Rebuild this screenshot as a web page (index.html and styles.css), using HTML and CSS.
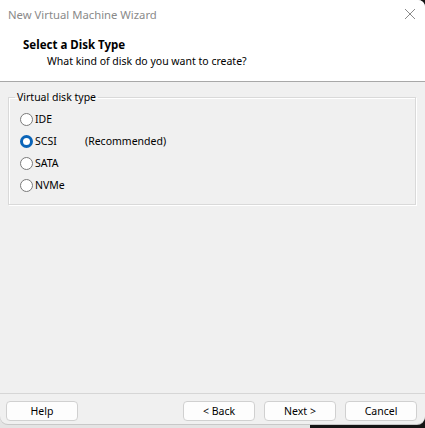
FILE: index.html
```html
<!DOCTYPE html>
<html>
<head>
<meta charset="utf-8">
<link rel="stylesheet" href="styles.css">
</head>
<body>
<div class="screen">
  <div class="window">
    <div class="header">
      <div class="titlebar">
        <span class="title">New Virtual Machine Wizard</span>
        <svg class="close" width="12" height="12" viewBox="0 0 12 12"><path d="M1 1L11 11M11 1L1 11" stroke="#8a8a8a" stroke-width="1" fill="none"/></svg>
      </div>
      <div class="heading">Select a Disk Type</div>
      <div class="sub">What kind of disk do you want to create?</div>
    </div>
    <div class="body">
      <fieldset class="group">
        <legend>Virtual disk type</legend>
        <div class="opt"><span class="radio"></span><span class="lbl">IDE</span></div>
        <div class="opt"><span class="radio on"></span><span class="lbl">SCSI</span><span class="rec">(Recommended)</span></div>
        <div class="opt"><span class="radio"></span><span class="lbl">SATA</span></div>
        <div class="opt"><span class="radio"></span><span class="lbl">NVMe</span></div>
      </fieldset>
    </div>
    <div class="footer">
      <button class="btn">Help</button>
      <div class="spacer"></div>
      <button class="btn">&lt; Back</button>
      <button class="btn">Next &gt;</button>
      <button class="btn">Cancel</button>
    </div>
  </div>
</div>
</body>
</html>
```
FILE: styles.css
```css
html, body { margin: 0; padding: 0; }
body { width: 425px; height: 428px; overflow: hidden; }
.screen {
  width: 425px; height: 428px;
  background: linear-gradient(to right, #e4e4e4 73%, #151515 73%);
}
.window {
  width: 425px; height: 424px;
  background: #f0f0f0;
  border-radius: 0 7px 8px 8px;
  overflow: hidden;
  display: flex; flex-direction: column;
  font-family: "Noto Sans", "Liberation Sans", sans-serif;
  font-size: 10.5px;
  color: #000;
  box-shadow: 0 1px 0 #c8c8c8;
}
.header {
  background: #fff;
  height: 81px;
  border-bottom: 1px solid #a8a8a8;
  box-sizing: content-box;
}
.titlebar {
  height: 28px;
  display: flex; align-items: center; justify-content: space-between;
  padding: 0 9px 0 8px;
}
.title { color: #8a8a8a; font-size: 11.3px; }
.heading {
  margin-left: 23px; margin-top: 9px;
  font-weight: bold; font-size: 11.5px; line-height: 16px;
}
.sub { margin-left: 47px; line-height: 16px; font-size: 10.5px; }
.body { padding: 8px 9px 0 8px; flex: 1; }
.group {
  margin: 0; padding: 4px 0 8px 11px;
  border: 1px solid #d9d9d9;
  box-shadow: inset 1px 1px 0 #fff, 1px 1px 0 #fff;
}
.group legend { padding: 0 2px; margin-left: -5px; font-size: 10.5px; line-height: 14px; }
.opt { height: 22px; display: flex; align-items: center; }
.radio {
  width: 11px; height: 11px; border-radius: 50%;
  border: 1px solid #7a7a7a; background: #fff;
  box-sizing: content-box;
}
.radio.on { width: 7px; height: 7px; border: 3px solid #0a64b8; }
.lbl { margin-left: 2px; width: 50px; }
.footer {
  height: 31px;
  border-top: 1px solid #d6d6d6;
  display: flex; align-items: flex-start;
  padding: 7px 8px 0 6px;
  box-sizing: border-box;
  gap: 9px;
}
.spacer { flex: 1; }
.btn {
  width: 72px; height: 20px;
  margin: 0; padding: 0;
  font-family: "Noto Sans", "Liberation Sans", sans-serif;
  font-size: 10.5px; color: #000;
  background: #fdfdfd;
  border: 1px solid #d0d0d0;
  border-radius: 4px;
}
```
